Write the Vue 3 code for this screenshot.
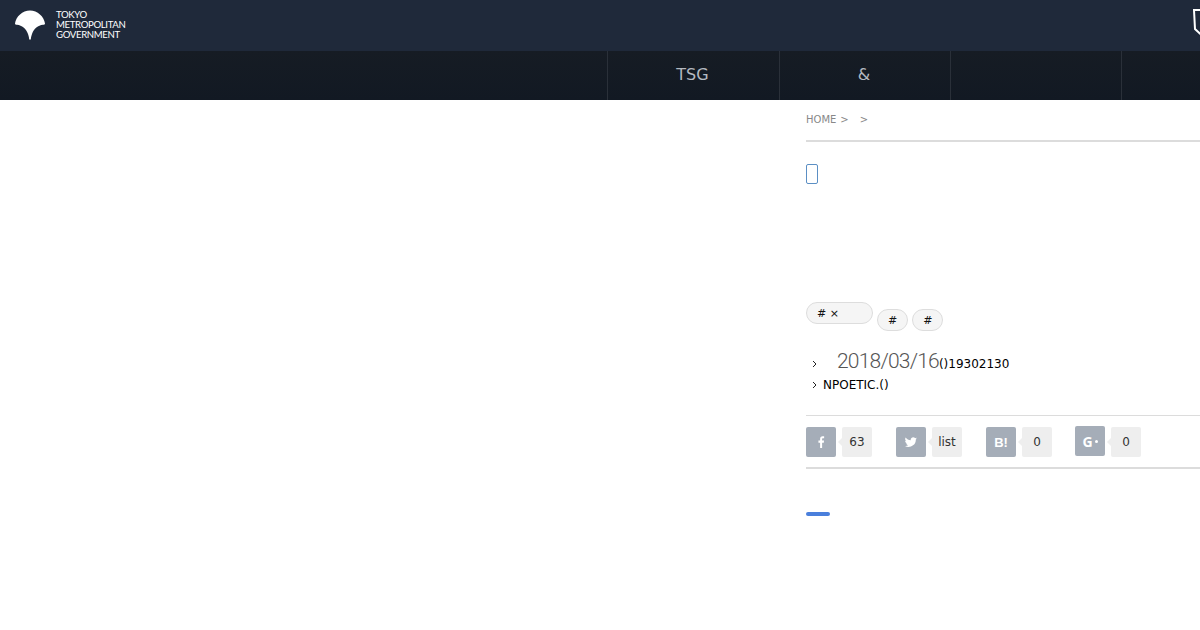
<script setup>
const navItems = ['TSG', '&', '', '']
const shares = [
  { key: 'f', count: '63', icon: 'f' },
  { key: 'tw', count: 'list', icon: 't' },
  { key: 'b', count: '0', icon: 'b' },
  { key: 'g', count: '0', icon: 'g' }
]
</script>

<template>
  <div class="page">
    <header class="top">
      <div class="logo">
        <svg class="ginkgo" width="30" height="30" viewBox="0 0 30 30" aria-hidden="true">
          <path d="M15 0.5C22.5 0.5 29 6.5 30 13.5C30 14.6 29 14.7 28 14.8C23 15.5 19 18.5 17 24C16.3 26 16 27.5 15.8 29.5H14.2C14 27.5 13.7 26 13 24C11 18.5 7 15.5 2 14.8C1 14.7 0 14.6 0 13.5C1 6.5 7.5 0.5 15 0.5Z" fill="#fff" />
        </svg>
        <div class="logo-text">
          <span>TOKYO</span>
          <span>METROPOLITAN</span>
          <span>GOVERNMENT</span>
        </div>
      </div>
      <svg class="shield" width="20" height="28" viewBox="0 0 20 28" aria-hidden="true">
        <path d="M1 1H19V20L9 26.5L2 20Z" fill="none" stroke="#fff" stroke-width="2" />
      </svg>
    </header>

    <nav class="nav">
      <div v-for="(item, i) in navItems" :key="i" class="nav-item">{{ item }}</div>
    </nav>

    <main class="main">
      <div class="crumbs"><span>HOME</span><span>&gt;</span><span class="crumb-last">&gt;</span></div>
      <div class="badge-row"><span class="badge"></span></div>

      <div class="tags">
        <span class="tag tag-wide"># ×</span>
        <span class="tag tag-low">#</span>
        <span class="tag tag-low">#</span>
      </div>

      <div class="info">
        <div class="info-row date-row">
          <svg class="chev" width="5" height="8" viewBox="0 0 5 8" aria-hidden="true"><path d="M1 1L4 4L1 7" fill="none" stroke="#222" stroke-width="1" /></svg>
          <span class="date">2018/03/16</span><span class="date-rest">()19302130</span>
        </div>
        <div class="info-row name-row">
          <svg class="chev" width="5" height="8" viewBox="0 0 5 8" aria-hidden="true"><path d="M1 1L4 4L1 7" fill="none" stroke="#222" stroke-width="1" /></svg>
          <span class="name">NPOETIC.()</span>
        </div>
      </div>

      <div class="share">
        <div v-for="s in shares" :key="s.key" class="share-item" :class="'share-' + s.key">
          <span class="share-btn">
            <svg v-if="s.icon === 'f'" width="7" height="12" viewBox="0 0 8 13" preserveAspectRatio="none" aria-hidden="true"><path d="M2.4 13V7.2H0.5V5H2.4V3.3C2.4 1.3 3.5 0.3 5.2 0.3C6 0.3 6.6 0.4 7 0.4V2.4H5.8C4.9 2.4 4.7 2.8 4.7 3.5V5H6.9L6.6 7.2H4.7V13Z" fill="#fff" /></svg>
            <svg v-else-if="s.icon === 't'" width="12" height="10" viewBox="0 0 15 12" aria-hidden="true"><path d="M15 1.6C14.4 1.9 13.8 2 13.2 2.1C13.9 1.7 14.4 1.1 14.6 0.3C14 0.7 13.3 1 12.6 1.1C11.4-0.2 9.4-0.3 8.1 0.9C7.3 1.7 6.9 2.8 7.2 3.8C4.6 3.7 2.3 2.5 0.7 0.5C-0.2 2 0.3 3.9 1.7 4.8C1.2 4.8 0.7 4.7 0.2 4.4C0.2 6 1.3 7.3 2.7 7.6C2.3 7.8 1.8 7.8 1.3 7.7C1.7 9 2.9 9.9 4.2 9.9C3 10.8 1.5 11.3 0 11.1C4.8 14 14 11 13.5 3C14.1 2.6 14.6 2.1 15 1.6Z" fill="#fff" /></svg>
            <span v-else-if="s.icon === 'b'" class="hatena">B!</span>
            <span v-else class="gplus">G<i></i></span>
          </span>
          <span class="share-count">{{ s.count }}</span>
        </div>
      </div>

      <div class="accent"></div>
    </main>
  </div>
</template>

<style>
html, body { margin: 0; background: #fff; }
</style>

<style scoped>
.page {
  width: 1200px;
  height: 630px;
  overflow: hidden;
  font-family: "DejaVu Sans", sans-serif;
  color: #222;
}
.top {
  height: 51px;
  box-sizing: border-box;
  background: #1f293a;
  display: flex;
  justify-content: space-between;
  align-items: flex-start;
  overflow: hidden;
}
.logo {
  display: flex;
  align-items: flex-start;
  gap: 11px;
  padding: 10px 0 0 15px;
}
.ginkgo { display: block; }
.logo-text {
  display: flex;
  flex-direction: column;
  font-family: "Lato", sans-serif;
  font-size: 9.6px;
  line-height: 9.8px;
  color: #fff;
  letter-spacing: -0.35px;
}
.shield {
  flex: none;
  margin: 9px -13px 0 0;
  display: block;
}
.nav {
  height: 49px;
  background: linear-gradient(#161c24, #121923);
  display: flex;
  padding-left: 607px;
  overflow: hidden;
}
.nav-item {
  width: 171px;
  box-sizing: border-box;
  border-left: 1px solid #2a3039;
  text-align: center;
  font-size: 16px;
  line-height: 47px;
  color: #b4b9c0;
  flex: none;
}
.nav-item:first-child { width: 172px; padding-right: 2px; }
.nav-item:nth-child(2) { padding-right: 2px; }
.main {
  padding-left: 806px;
}
.crumbs {
  height: 42px;
  box-sizing: border-box;
  border-bottom: 2px solid #dcdcdc;
  font-size: 10px;
  line-height: 39px;
  color: #888;
  display: flex;
  gap: 4px;
}
.crumb-last { margin-left: 7px; }
.badge-row {
  height: 160px;
  box-sizing: border-box;
  padding-top: 22px;
}
.badge {
  display: block;
  width: 12px;
  height: 20px;
  box-sizing: border-box;
  border: 1px solid #5b8fc4;
  border-radius: 2px;
}
.tags {
  display: flex;
  align-items: flex-start;
  gap: 4px;
}
.tag {
  box-sizing: border-box;
  height: 22px;
  border: 1px solid #ddd;
  border-radius: 11px;
  background: #f5f5f5;
  font-size: 11px;
  line-height: 21px;
  color: #111;
  padding: 0 10px;
}
.tag-wide { width: 67px; }
.tag-low { margin-top: 7px; }
.info { padding-top: 18px; }
.info-row {
  display: flex;
  align-items: center;
}
.chev { flex: none; margin: 0 0 0 6px; display: block; }
.date-row { height: 24px; }
.date-row .chev { margin-top: 6px; }
.date {
  margin-left: 20px;
  font-family: "Roboto", sans-serif;
  font-size: 21px;
  font-weight: 300;
  color: #555;
  letter-spacing: -0.8px;
}
.date-rest {
  font-size: 12px;
  margin-top: 6px;
  color: #000;
}
.name-row { height: 18px; margin-top: 3px; }
.name {
  margin-left: 6px;
  font-size: 12px;
  color: #000;
}
.share {
  margin-top: 21px;
  height: 54px;
  box-sizing: border-box;
  border-top: 1px solid #dcdcdc;
  border-bottom: 2px solid #dcdcdc;
  padding-top: 11px;
  display: flex;
}
.share-item { display: flex; gap: 6px; }
.share-f, .share-tw { margin-right: 24px; }
.share-b { margin-right: 23px; }
.share-g { margin-top: -1px; }
.share-btn {
  width: 30px;
  height: 30px;
  border-radius: 2px;
  background: #a5adb8;
  display: flex;
  align-items: center;
  justify-content: center;
  color: #fff;
}
.hatena {
  font-family: "Liberation Sans", sans-serif;
  font-weight: 700;
  font-size: 13px;
}
.gplus {
  font-family: "Open Sans", sans-serif;
  font-weight: 700;
  font-size: 14px;
  display: flex;
  align-items: center;
}
.gplus i {
  display: block;
  width: 3px;
  height: 3px;
  border-radius: 50%;
  background: #fff;
  margin-left: 2px;
}
.share-count {
  position: relative;
  width: 30px;
  height: 30px;
  border-radius: 2px;
  background: #eee;
  text-align: center;
  font-size: 12px;
  line-height: 30px;
  color: #333;
}
.share-g .share-count { margin-top: 1px; }
.share-count::before {
  content: "";
  position: absolute;
  left: -4px;
  top: 11px;
  width: 0;
  height: 0;
  border-top: 4px solid transparent;
  border-bottom: 4px solid transparent;
  border-right: 4px solid #eee;
}
.accent {
  margin-top: 43px;
  width: 24px;
  height: 4px;
  border-radius: 2px;
  background: #4a7fdc;
}
</style>
